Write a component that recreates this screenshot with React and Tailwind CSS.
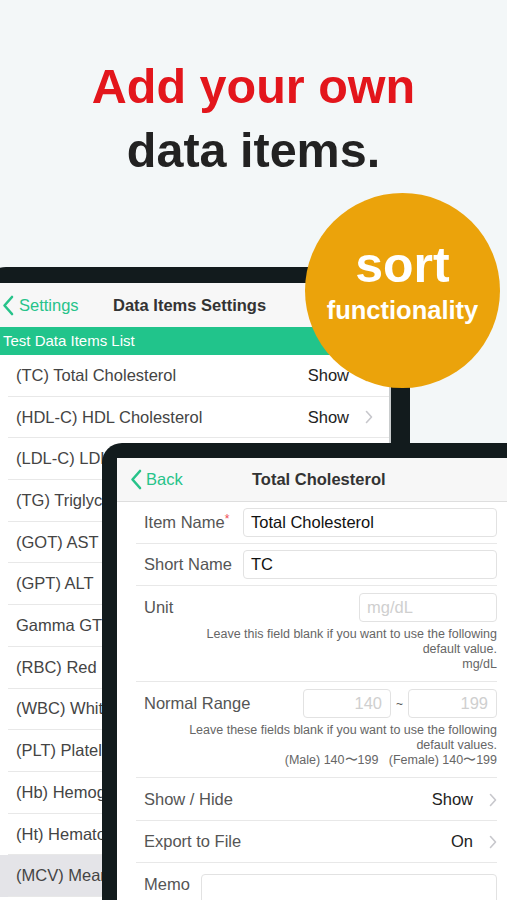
import React from 'react'

// Back chevron used in the navigation bars.
function BackChevron() {
  return (
    <svg width="12" height="21" viewBox="0 0 12 21" className="shrink-0">
      <path d="M10 2 L2.5 10.5 L10 19" fill="none" stroke="#27c38a" strokeWidth="2.6" strokeLinecap="round" strokeLinejoin="round" />
    </svg>
  )
}

function Disclosure() {
  return (
    <svg width="8" height="14" viewBox="0 0 8 14" className="shrink-0">
      <path d="M1.5 1.5 L6.5 7 L1.5 12.5" fill="none" stroke="#c7c7cc" strokeWidth="1.6" strokeLinecap="round" strokeLinejoin="round" />
    </svg>
  )
}

const items = [
  ['(TC) Total Cholesterol', 'Show'],
  ['(HDL-C) HDL Cholesterol', 'Show'],
  ['(LDL-C) LDL Cholesterol', 'Show'],
  ['(TG) Triglycerides', 'Show'],
  ['(GOT) AST', 'Show'],
  ['(GPT) ALT', 'Show'],
  ['Gamma GTP', 'Show'],
  ['(RBC) Red Blood Cells', 'Show'],
  ['(WBC) White Blood Cells', 'Show'],
  ['(PLT) Platelets', 'Show'],
  ['(Hb) Hemoglobin', 'Show'],
  ['(Ht) Hematocrit', 'Show'],
  ['(MCV) Mean Corpuscular Volume', 'Show'],
]

function BackTablet() {
  return (
    <div className="-ml-4 mt-[85px] w-[426px] rounded-[22px] bg-[#121b1d] pt-4 pl-4 pr-[19px]">
      <div className="w-[391px] h-[640px] bg-white border-r-2 border-[#c9cccd] overflow-hidden">
        {/* barra de navegación */}
        <div className="relative h-[44px] bg-[#f7f7f7] flex items-center">
          <div className="flex items-center gap-[5px] pl-[2px] text-[#27c38a] text-[16.5px]">
            <BackChevron />
            <span>Settings</span>
          </div>
          <span className="absolute left-[113px] text-[16.5px] font-semibold text-[#333]">Data Items Settings</span>
        </div>
        <div className="h-[28px] bg-[#21c48b] text-white text-[15px] flex items-center pl-[3px]">
          Test Data Items List
        </div>
        {items.map(([name, val], i) => (
          <div key={name} className={i === 12 ? 'bg-[#e4e4e8]' : ''}>
            <div className="ml-2 h-[41.7px] border-b border-[#e8e8e8] pl-2 pr-4 flex items-center justify-between">
              <span className="text-[16.5px] text-[#444] whitespace-nowrap">{name}</span>
              <div className="flex items-center gap-[16px]">
                <span className="text-[16.5px] text-[#222]">{val}</span>
                <Disclosure />
              </div>
            </div>
          </div>
        ))}
      </div>
    </div>
  )
}

function Input({ className = '', children }) {
  return (
    <div className={`h-[29px] rounded-[4px] border border-[#e2e2e2] bg-white flex items-center text-[16.5px] ${className}`}>
      {children}
    </div>
  )
}

function FrontTablet() {
  return (
    <div className="absolute left-[102px] top-[443px] w-[440px] h-[500px] rounded-[20px] bg-[#121b1d] pt-[15px] pl-[15px]">
      <div className="w-[400px] h-[485px] bg-white overflow-hidden">
        <div className="relative h-[44px] bg-[#f7f7f7] border-b border-[#dedede] flex items-center">
          <div className="flex items-center gap-[4px] pl-[13px] text-[#27c38a] text-[16.5px]">
            <BackChevron />
            <span>Back</span>
          </div>
          <span className="absolute left-[135px] text-[16.5px] font-semibold text-[#333]">Total Cholesterol</span>
        </div>

        <div className="ml-[19px] pr-[20px]">
          {/* Item Name */}
          <div className="h-[42px] border-b border-[#e8e8e8] pl-2 flex items-center">
            <span className="w-[99px] text-[16.5px] text-[#555] whitespace-nowrap">
              Item Name<span className="text-[#ee4b55] text-[12px] align-top">*</span>
            </span>
            <Input className="flex-1 px-[7px] text-[#111]">Total Cholesterol</Input>
          </div>
          {/* Short Name */}
          <div className="h-[42px] border-b border-[#e8e8e8] pl-2 flex items-center">
            <span className="w-[99px] text-[16.5px] text-[#555] whitespace-nowrap">Short Name</span>
            <Input className="flex-1 px-[7px] text-[#111]">TC</Input>
          </div>
          {/* Unit */}
          <div className="h-[96px] border-b border-[#e8e8e8] pl-2 pt-[7px]">
            <div className="flex items-center justify-between">
              <span className="text-[16.5px] text-[#555]">Unit</span>
              <Input className="w-[138px] px-[7px] text-[#cfcfcf]">mg/dL</Input>
            </div>
            <div className="mt-[5px] text-right text-[12.5px] leading-[15px] text-[#666]">
              <p>Leave this field blank if you want to use the following</p>
              <p>default value.</p>
              <p>mg/dL</p>
            </div>
          </div>
          {/* Normal Range */}
          <div className="h-[96px] border-b border-[#e8e8e8] pl-2 pt-[7px]">
            <div className="flex items-center justify-between">
              <span className="text-[16.5px] text-[#555]">Normal Range</span>
              <div className="flex items-center gap-[5px]">
                <Input className="w-[88px] justify-end pr-[8px] text-[#cfcfcf]">140</Input>
                <span className="text-[12px] text-[#555]">~</span>
                <Input className="w-[89px] justify-end pr-[8px] text-[#cfcfcf]">199</Input>
              </div>
            </div>
            <div className="mt-[5px] text-right text-[12.5px] leading-[15px] text-[#666]">
              <p>Leave these fields blank if you want to use the following</p>
              <p>default values.</p>
              <p>(Male) 140〜199&nbsp;&nbsp;&nbsp;(Female) 140〜199</p>
            </div>
          </div>
          {/* Show / Hide */}
          <div className="h-[43px] border-b border-[#e8e8e8] pl-2 pt-[1px] flex items-center justify-between">
            <span className="text-[16.5px] text-[#555]">Show / Hide</span>
            <div className="flex items-center gap-[16px]">
              <span className="text-[16.5px] text-[#222]">Show</span>
              <Disclosure />
            </div>
          </div>
          {/* Export */}
          <div className="h-[42px] border-b border-[#e8e8e8] pl-2 flex items-center justify-between">
            <span className="text-[16.5px] text-[#555]">Export to File</span>
            <div className="flex items-center gap-[16px]">
              <span className="text-[16.5px] text-[#222]">On</span>
              <Disclosure />
            </div>
          </div>
          {/* Memo */}
          <div className="pl-2 pt-[11px] flex items-start">
            <span className="w-[57px] text-[16.5px] text-[#555] leading-[20px]">Memo</span>
            <div className="flex-1 h-[60px] rounded-[4px] border border-[#e2e2e2]" />
          </div>
        </div>
      </div>
    </div>
  )
}

export default function App() {
  return (
    <div className="relative w-[507px] h-[900px] overflow-hidden bg-[#f3f7f8] font-['Liberation_Sans',Arial,sans-serif]">
      <h1 className="pt-[54px] text-center text-[48.5px] leading-[64px] font-bold">
        <span className="block text-[#e3161c]">Add your own</span>
        <span className="block text-[#222]">data items.</span>
      </h1>

      <BackTablet />

      {/* insignia naranja */}
      <div className="absolute left-[305px] top-[193px] w-[195px] h-[195px] rounded-full bg-[#eba30b] flex flex-col items-center text-white font-bold">
        <span className="mt-[42px] text-[50px] leading-[60px]">sort</span>
        <span className="text-[25.5px] leading-[30px]">functionality</span>
      </div>

      <FrontTablet />
    </div>
  )
}
